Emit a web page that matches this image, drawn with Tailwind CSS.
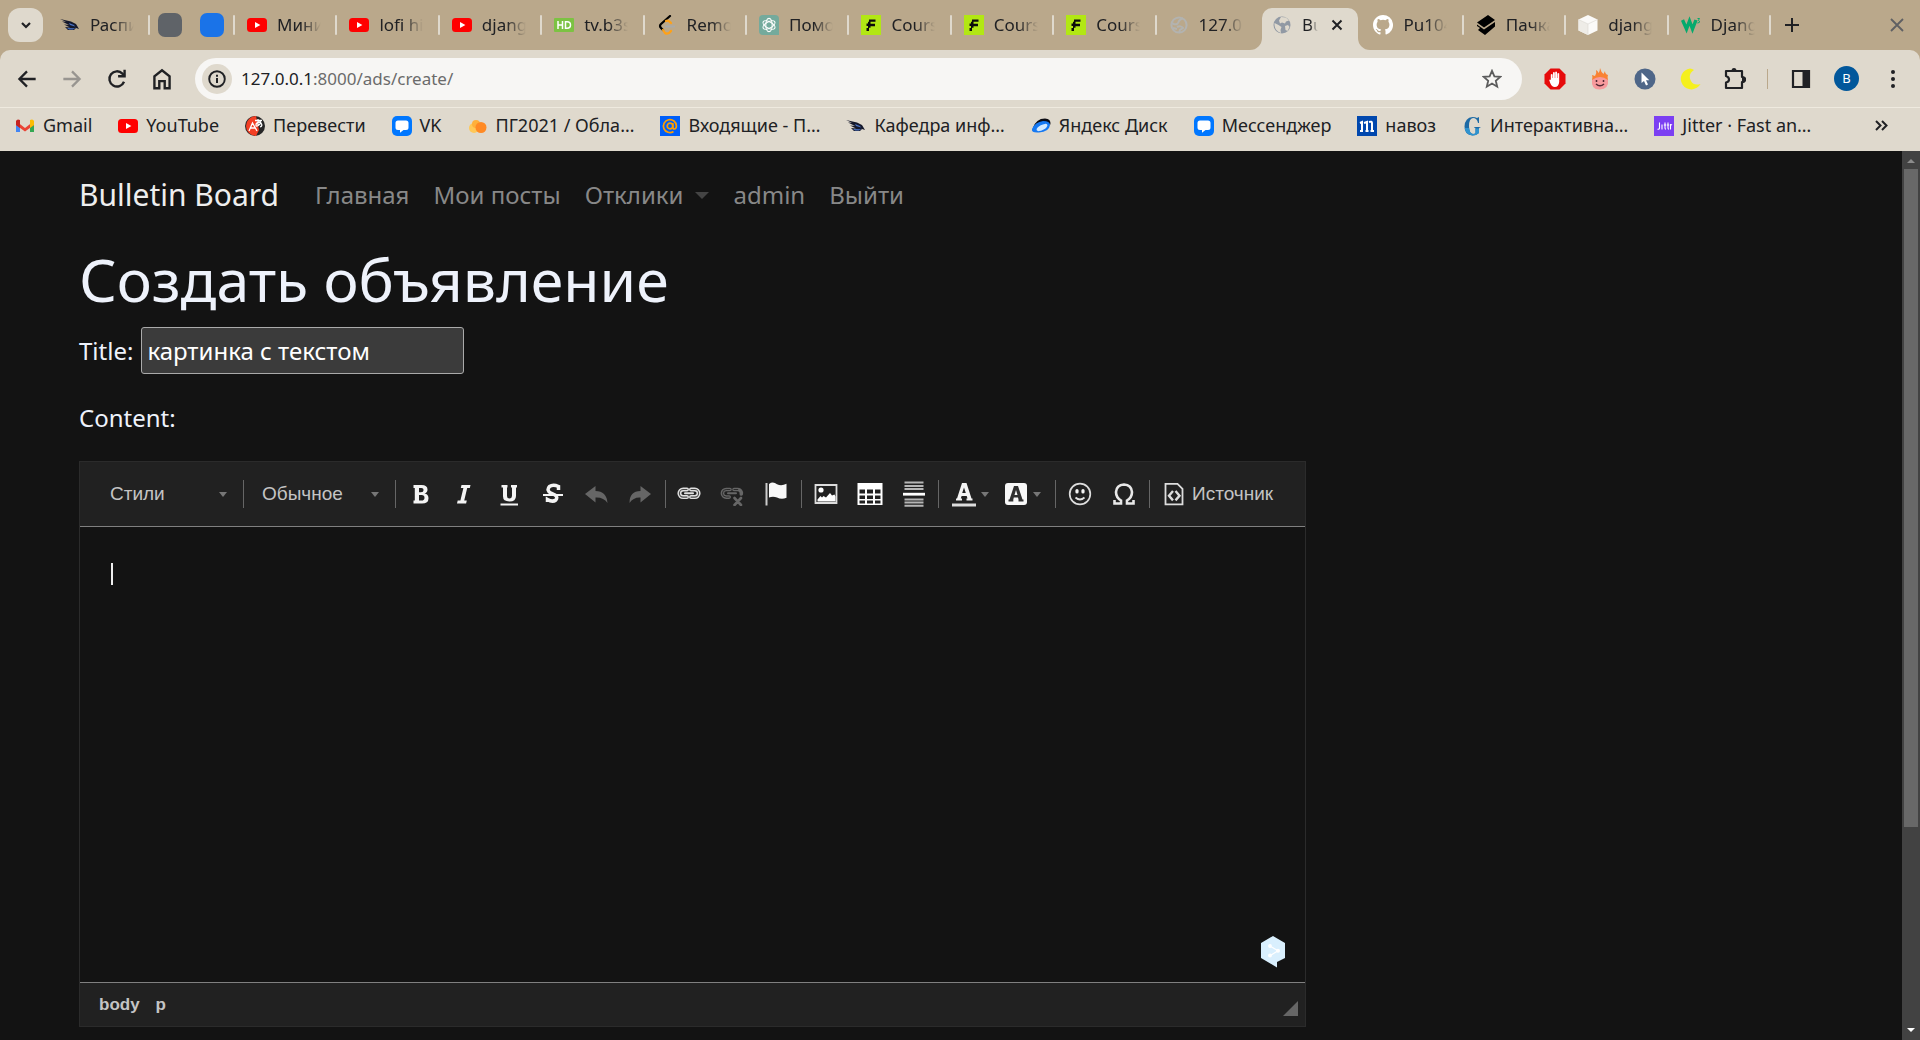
<!DOCTYPE html>
<html lang="ru">
<head>
<meta charset="utf-8">
<title>Bulletin Board</title>
<script src="https://cdn.jsdelivr.net/npm/@tailwindcss/browser@4"></script>
</head>
<body class="flex h-screen flex-col overflow-hidden bg-[#131313] font-['Noto_Sans',sans-serif] text-[#202124]">

<svg class="hidden" aria-hidden="true">
  <symbol id="yt" viewBox="0 0 20 20"><rect y="3" width="20" height="14" rx="3.5" fill="#f00"/><path d="M8 7l5.400 3L8 13z" fill="#fff"/></symbol>
  <symbol id="bird" viewBox="0 0 20 20"><path d="M0 4l11 2.500 5 2.500 3 5-3-1-2 2H8l-3-3 5 .5-6-3 5 .5L2 6.500l4 .3z" fill="#15192c"/><path d="M7 13l7 .3 2-.8-3 2H9zM9 8l5 2 1 1.500-5-1.500z" fill="#4a72c4"/></symbol>
  <symbol id="eff" viewBox="0 0 20 20"><path d="M0 0h20v20H0z" fill="#b2e714"/><path d="M8 4.500h6.500v2.300H9.500v2H14v2.400H9.500v1.600H8V16H5.500v-3H7v-2H5.500V8.500H7V6.800h1z" fill="#0c0c0c"/></symbol>
  <symbol id="globe" viewBox="0 0 20 20"><circle cx="10" cy="10" r="8.500" fill="#9199a4"/><path d="M9 2l5 .5 3 3-3 1-1 2-3-1-2 1-1-3zM2.500 8l4 2 3 2-1 3 .5 3q-6-2-6.500-8zM13 11l3-1 1.500 2-2 4-2-1z" fill="#dfd9cd"/></symbol>
  <symbol id="globeout" viewBox="0 0 20 20"><circle cx="10" cy="10" r="7.600" fill="none" stroke="#b3b3b0" stroke-width="2"/><path d="M3 8c2 1 3 2 5 1s1-3 3-4l3-2M8 12c2-1 5-1 6 1l-3 2-1 3M4 13l4 1" fill="none" stroke="#b3b3b0" stroke-width="2"/></symbol>
  <symbol id="chat" viewBox="0 0 20 20"><rect width="20" height="20" rx="5" fill="#07f"/><path d="M6 4.500h8A2.500 2.500 0 0 1 16.500 7v4.500A2.500 2.500 0 0 1 14 14h-2.500L8 16.800V14H6a2.500 2.500 0 0 1-2.500-2.500V7A2.500 2.500 0 0 1 6 4.500z" fill="#fff"/></symbol>
  <symbol id="caret" viewBox="0 0 8 5"><path d="M0 0h8L4 5z" fill="#777"/></symbol>
</svg>

<header class="shrink-0 bg-[#baa88b]">
  <!-- tab strip -->
  <div class="flex h-[50px] items-center pl-2 text-[17px]">
    <button aria-label="Поиск вкладок" class="flex h-[34px] w-[35px] shrink-0 items-center justify-center rounded-xl bg-[#dfd9cd]"><svg class="size-3" viewBox="0 0 12 12"><path d="M2 4l4 4 4-4" fill="none" stroke="#202124" stroke-width="2.200"/></svg></button>
    <a href="#" class="ml-[17px] flex h-full w-[88px] shrink-0 items-center gap-[10px]"><svg class="size-5 shrink-0"><use href="#bird"/></svg><span class="w-11 overflow-hidden whitespace-nowrap [mask-image:linear-gradient(to_right,black_55%,transparent)]">Расписание</span></a>
    <span class="h-5 w-0.5 shrink-0 rounded bg-[#dfd9cd]"></span>
    <a href="#" aria-label="Вкладка" class="ml-2 h-6 w-6 shrink-0 rounded-[7px] bg-[#5f6368]"></a>
    <a href="#" aria-label="Вкладка" class="ml-[18px] h-6 w-6 shrink-0 rounded-[7px] bg-[#1a73e8]"></a>
    <span class="ml-[9px] h-5 w-0.5 shrink-0 rounded bg-[#dfd9cd]"></span>
    <nav class="grid h-full min-w-0 flex-1 grid-cols-15">
      <a href="#" class="flex min-w-0 items-center gap-[10px] pl-3"><svg class="size-5 shrink-0"><use href="#yt"/></svg><span class="w-[44px] overflow-hidden whitespace-nowrap [mask-image:linear-gradient(to_right,black_55%,transparent)]">Миникурс</span><span class="ml-auto h-5 w-0.5 rounded bg-[#dfd9cd]"></span></a>
      <a href="#" class="flex min-w-0 items-center gap-[10px] pl-3"><svg class="size-5 shrink-0"><use href="#yt"/></svg><span class="w-[44px] overflow-hidden whitespace-nowrap [mask-image:linear-gradient(to_right,black_55%,transparent)]">lofi hip</span><span class="ml-auto h-5 w-0.5 rounded bg-[#dfd9cd]"></span></a>
      <a href="#" class="flex min-w-0 items-center gap-[10px] pl-3"><svg class="size-5 shrink-0"><use href="#yt"/></svg><span class="w-[44px] overflow-hidden whitespace-nowrap [mask-image:linear-gradient(to_right,black_55%,transparent)]">django</span><span class="ml-auto h-5 w-0.5 rounded bg-[#dfd9cd]"></span></a>
      <a href="#" class="flex min-w-0 items-center gap-[10px] pl-3"><svg class="size-5 shrink-0" viewBox="0 0 20 20"><rect y="3" width="20" height="14" rx="1" fill="#7cc243"/><path d="M4 6v8M8.500 6v8M4 10h4.500M11.500 6.800v6.400h1.500q3.500 0 3.500-3.200T13 6.800z" fill="none" stroke="#fff" stroke-width="1.500"/></svg><span class="w-[44px] overflow-hidden whitespace-nowrap [mask-image:linear-gradient(to_right,black_55%,transparent)]">tv.b3s</span><span class="ml-auto h-5 w-0.5 rounded bg-[#dfd9cd]"></span></a>
      <a href="#" class="flex min-w-0 items-center gap-[10px] pl-3"><svg class="size-5 shrink-0" viewBox="0 0 20 20" fill="none" stroke-width="2.200" stroke-linecap="round"><path d="M13 1L4 9q-2 2 0 4l2 2" stroke="#000"/><path d="M9 6q2-1 4 1l1 1M6 15l2 3q3 2 6-2" stroke="#ffa116"/><path d="M9 11.500h8" stroke="#aaa"/></svg><span class="w-[44px] overflow-hidden whitespace-nowrap [mask-image:linear-gradient(to_right,black_55%,transparent)]">Remove</span><span class="ml-auto h-5 w-0.5 rounded bg-[#dfd9cd]"></span></a>
      <a href="#" class="flex min-w-0 items-center gap-[10px] pl-3"><svg class="size-5 shrink-0" viewBox="0 0 20 20"><path d="M4 0h12q4 0 4 4v16H4q-4 0-4-4V4q0-4 4-4z" fill="#74aa9c"/><g fill="none" stroke="#fff" stroke-width="1.100"><ellipse cx="10" cy="10" rx="3.200" ry="6.600"/><ellipse cx="10" cy="10" rx="3.200" ry="6.600" transform="rotate(60 10 10)"/><ellipse cx="10" cy="10" rx="3.200" ry="6.600" transform="rotate(120 10 10)"/></g></svg><span class="w-[44px] overflow-hidden whitespace-nowrap [mask-image:linear-gradient(to_right,black_55%,transparent)]">Помощь</span><span class="ml-auto h-5 w-0.5 rounded bg-[#dfd9cd]"></span></a>
      <a href="#" class="flex min-w-0 items-center gap-[10px] pl-3"><svg class="size-5 shrink-0"><use href="#eff"/></svg><span class="w-[44px] overflow-hidden whitespace-nowrap [mask-image:linear-gradient(to_right,black_55%,transparent)]">Course</span><span class="ml-auto h-5 w-0.5 rounded bg-[#dfd9cd]"></span></a>
      <a href="#" class="flex min-w-0 items-center gap-[10px] pl-3"><svg class="size-5 shrink-0"><use href="#eff"/></svg><span class="w-[44px] overflow-hidden whitespace-nowrap [mask-image:linear-gradient(to_right,black_55%,transparent)]">Course</span><span class="ml-auto h-5 w-0.5 rounded bg-[#dfd9cd]"></span></a>
      <a href="#" class="flex min-w-0 items-center gap-[10px] pl-3"><svg class="size-5 shrink-0"><use href="#eff"/></svg><span class="w-[44px] overflow-hidden whitespace-nowrap [mask-image:linear-gradient(to_right,black_55%,transparent)]">Course</span><span class="ml-auto h-5 w-0.5 rounded bg-[#dfd9cd]"></span></a>
      <a href="#" class="flex min-w-0 items-center gap-[10px] pl-3"><svg class="size-5 shrink-0"><use href="#globeout"/></svg><span class="w-[44px] overflow-hidden whitespace-nowrap [mask-image:linear-gradient(to_right,black_55%,transparent)]">127.0.</span></a>
      <div class="relative mr-[3px] ml-[3px] flex h-[42px] items-center self-end rounded-t-[10px] bg-[#dfd9cd] pb-2 pl-[10px]">
        <svg class="absolute bottom-0 -left-3 size-3" viewBox="0 0 12 12"><path d="M12 0v12H0A12 12 0 0 0 12 0z" fill="#dfd9cd"/></svg>
        <svg class="absolute -right-3 bottom-0 size-3" viewBox="0 0 12 12"><path d="M0 0v12h12A12 12 0 0 1 0 0z" fill="#dfd9cd"/></svg>
        <svg class="size-5 shrink-0"><use href="#globe"/></svg>
        <a href="#" class="ml-[10px] w-4 overflow-hidden whitespace-nowrap [mask-image:linear-gradient(to_right,black_50%,transparent)]">Bulletin</a>
        <button aria-label="Закрыть вкладку" class="ml-[13px]"><svg class="size-3" viewBox="0 0 12 12"><path d="M1.500 1.500l9 9m0-9l-9 9" stroke="#202124" stroke-width="2"/></svg></button>
      </div>
      <a href="#" class="flex min-w-0 items-center gap-[10px] pl-3"><svg class="size-5 shrink-0" viewBox="0 0 16 16" fill="#fff"><path d="M8 0C3.580 0 0 3.580 0 8c0 3.540 2.290 6.530 5.470 7.590.4.070.55-.17.55-.38 0-.19-.01-.82-.01-1.490-2.010.37-2.530-.49-2.690-.94-.09-.23-.48-.94-.82-1.130-.28-.15-.68-.52-.01-.53.63-.01 1.080.58 1.230.82.72 1.210 1.870.87 2.330.66.070-.52.28-.87.510-1.070-1.780-.2-3.640-.89-3.640-3.950 0-.87.310-1.590.82-2.150-.08-.2-.36-1.020.08-2.120 0 0 .67-.21 2.200.82a7.600 7.600 0 0 1 4 0c1.530-1.040 2.200-.82 2.200-.82.44 1.100.16 1.920.08 2.120.51.56.82 1.270.82 2.150 0 3.070-1.870 3.750-3.650 3.950.29.25.54.73.54 1.480 0 1.070-.01 1.930-.01 2.200 0 .21.15.46.55.38A8 8 0 0 0 8 0z"/></svg><span class="w-[44px] overflow-hidden whitespace-nowrap [mask-image:linear-gradient(to_right,black_55%,transparent)]">Pu104</span><span class="ml-auto h-5 w-0.5 rounded bg-[#dfd9cd]"></span></a>
      <a href="#" class="flex min-w-0 items-center gap-[10px] pl-3"><svg class="size-5 shrink-0" viewBox="0 0 20 20"><path d="M1 7.500L12 0l7 5L8 12.500zM1 9.500l7 5L19 7v4.500L9 20l-7-5 2-2-3-2z" fill="#000"/></svg><span class="w-[44px] overflow-hidden whitespace-nowrap [mask-image:linear-gradient(to_right,black_55%,transparent)]">Пачка</span><span class="ml-auto h-5 w-0.5 rounded bg-[#dfd9cd]"></span></a>
      <a href="#" class="flex min-w-0 items-center gap-[10px] pl-3"><svg class="size-5 shrink-0" viewBox="0 0 20 20"><path d="M10 0l9.500 4.500v11L10 20 .5 15.500v-11z" fill="#fbfaf8"/><path d="M.5 4.500L10 9v11L.5 15.500z" fill="#eeece7"/><path d="M.5 4.500L10 9l9.500-4.500M10 9v11" fill="none" stroke="#dedbd5" stroke-width=".7"/></svg><span class="w-[44px] overflow-hidden whitespace-nowrap [mask-image:linear-gradient(to_right,black_55%,transparent)]">django</span><span class="ml-auto h-5 w-0.5 rounded bg-[#dfd9cd]"></span></a>
      <a href="#" class="flex min-w-0 items-center gap-[10px] pl-3"><svg class="size-5 shrink-0" viewBox="0 0 20 20" fill="none"><path d="M1.500 5l4 9 3-8 3 8L15 5" stroke="#04aa6d" stroke-width="3.400"/><path d="M16.500 3.500h2l-1.200 2q2 .5 1 2l-2 .5" stroke="#04aa6d" stroke-width="1"/></svg><span class="w-[44px] overflow-hidden whitespace-nowrap [mask-image:linear-gradient(to_right,black_55%,transparent)]">Django</span><span class="ml-auto h-5 w-0.5 rounded bg-[#dfd9cd]"></span></a>
    </nav>
    <div class="flex w-[149px] shrink-0 items-center justify-between pr-4 pl-[14px]">
      <button aria-label="Новая вкладка"><svg class="size-[14px]" viewBox="0 0 14 14"><path d="M7 0v14M0 7h14" stroke="#202124" stroke-width="2"/></svg></button>
      <button aria-label="Закрыть окно"><svg class="size-[14px]" viewBox="0 0 14 14"><path d="M1 1l12 12M13 1L1 13" stroke="#5f6063" stroke-width="1.800"/></svg></button>
    </div>
  </div>

  <!-- address bar -->
  <div class="flex h-[58px] items-center rounded-t-[10px] border-b border-[#efeadf] bg-[#dfd9cd] pr-[17px] pl-[14px]">
    <div class="flex shrink-0 gap-[19px]">
      <button aria-label="Назад"><svg class="size-[26px]" viewBox="0 0 24 24" fill="none" stroke="#202124" stroke-width="2.100"><path d="M20 12H5M12 5l-7 7 7 7"/></svg></button>
      <button aria-label="Вперёд"><svg class="size-[26px]" viewBox="0 0 24 24" fill="none" stroke="#989590" stroke-width="2.100"><path d="M4 12h15M12 5l7 7-7 7"/></svg></button>
      <button aria-label="Обновить"><svg class="size-[26px]" viewBox="0 0 24 24" fill="none" stroke="#202124" stroke-width="2.200"><path d="M18.500 14.500A7 7 0 1 1 17 7l2 2"/><path d="M19 3.500v6h-6"/></svg></button>
      <button aria-label="Домой"><svg class="size-[26px]" viewBox="0 0 24 24" fill="none" stroke="#202124" stroke-width="2.200"><path d="M5 20.500V9.500L12 4l7 5.500v11h-4.500V14h-5v6.500z"/></svg></button>
    </div>
    <div class="ml-5 flex h-[42px] min-w-0 flex-1 items-center rounded-full bg-[#f7f6f4] pr-5 pl-[7px]">
      <button aria-label="Сведения о сайте" class="flex size-[30px] shrink-0 items-center justify-center rounded-full bg-[#dfd9cd]"><svg class="size-[18px]" viewBox="0 0 18 18"><circle cx="9" cy="9" r="7.800" fill="none" stroke="#202124" stroke-width="1.900"/><path d="M9 8v5M9 4.700v2" stroke="#202124" stroke-width="2"/></svg></button>
      <a href="#" class="ml-[9px] flex-1 pt-px text-[17px] text-[#6b6b6b]"><span class="text-[#202124]">127.0.0.1</span>:8000/ads/create/</a>
      <button aria-label="Добавить в закладки"><svg class="size-5" viewBox="0 0 20 20"><path d="M10 1.800l2.400 5.500 6 .5-4.600 4 1.400 5.900L10 14.500l-5.200 3.200 1.400-5.900-4.600-4 6-.5z" fill="none" stroke="#5c5c5c" stroke-width="1.800"/></svg></button>
    </div>
    <div class="ml-[22px] flex shrink-0 items-center">
      <div class="flex gap-[23px]">
        <button aria-label="AdBlock"><svg class="size-[22px]" viewBox="0 0 22 22"><path d="M6.500.5h9l6 6v9l-6 6h-9l-6-6v-9z" fill="#e60b0b"/><path d="M6.800 12V6.500q.9-1 1.800 0V10h.4V4.500q.9-1 1.800 0V10h.4V4q.9-1 1.800 0v6h.4V5.500q.9-1 1.800 0V14q-.5 5-4.500 5-3 0-4.500-4l-1-3q.8-1 1.600 0z" fill="#fff"/></svg></button>
        <button aria-label="Hola"><svg class="size-[22px]" viewBox="0 0 22 22"><path d="M11 0q1 4 3.500 6L16 3q0 3 3 4-1 2 0 5l-1 5H4L3 12q1-3 0-5l3 1q2-3 1-6 2 1 2.500 3Q11 3 11 0z" fill="#f98234"/><path d="M3 12q8-6 16 0 1 9-8 9.500T3 12z" fill="#f79a9d"/><path d="M7.500 12v2M14.500 12v2M7 16q4 3.500 8 0" fill="none" stroke="#552a35" stroke-width="1.500"/></svg></button>
        <button aria-label="Курсор"><svg class="size-[22px]" viewBox="0 0 22 22"><circle cx="11" cy="11" r="10.500" fill="#4e6688"/><path d="M7.500 4.500v10.500l2.500-2 2 4.500 2-1-2-4.200h3.300z" fill="#fff"/></svg></button>
        <button aria-label="Тёмная тема"><svg class="size-[22px]" viewBox="0 0 22 22"><path d="M11 .5A10.500 10.500 0 1 0 21.500 16Q14 18 11.500 12 9 6 15 2 13 .5 11 .5z" fill="#f5f01e"/></svg></button>
        <button aria-label="Расширения"><svg class="size-[22px]" viewBox="0 0 22 22"><path d="M2 3h16v6q3 0 3 2.500T18 14v6H2v-5.500q3-.5 3-3T2 8z" fill="none" stroke="#202124" stroke-width="2.200" stroke-linejoin="round"/><path d="M7.500 3q0-3 2.500-3t2.500 3zM18 8.500q4 0 4 3t-4 3z" fill="#202124"/></svg></button>
      </div>
      <span class="ml-[21px] h-5 w-px bg-[#baa88b]"></span>
      <button aria-label="Боковая панель" class="ml-[23px]"><svg class="size-5" viewBox="0 0 20 20"><path d="M2 2h16v16H2z" fill="none" stroke="#202124" stroke-width="2.200"/><path d="M11.500 2H18v16h-6.500z" fill="#202124"/></svg></button>
      <button class="ml-[23px] flex size-[25px] items-center justify-center rounded-full bg-[#01579b] text-[13px] text-white">B</button>
      <button aria-label="Меню" class="ml-6"><svg class="size-5" viewBox="0 0 20 20" fill="#202124"><circle cx="10" cy="3" r="2"/><circle cx="10" cy="10" r="2"/><circle cx="10" cy="17" r="2"/></svg></button>
    </div>
  </div>

  <!-- bookmarks -->
  <nav class="flex h-[43px] items-center gap-[26px] bg-[#dfd9cd] pr-8 pb-2 pl-[15px] text-[18px] whitespace-nowrap">
    <a href="#" class="flex items-center gap-2"><svg class="size-5" viewBox="0 0 20 20"><path d="M1 5v11h4V8z" fill="#4285f4"/><path d="M19 5v11h-4V8z" fill="#34a853"/><path d="M1 5l9 7 9-7v4l-9 6.500L1 9z" fill="#ea4335"/><path d="M1 9V5q1-2.500 4-1v8z" fill="#c5221f"/><path d="M19 9V5q-1-2.500-4-1v8z" fill="#fbbc04"/></svg>Gmail</a>
    <a href="#" class="flex items-center gap-2"><svg class="size-5"><use href="#yt"/></svg>YouTube</a>
    <a href="#" class="flex items-center gap-2"><svg class="size-5" viewBox="0 0 20 20"><circle cx="10" cy="10" r="10" fill="#262626"/><path d="M11 0A10 10 0 1 0 11 20l3-6z" fill="#f33f24"/><path d="M4 15l3.500-8L12 15M5.500 12h5M10 4.500h7M13 3v6.500M16 6q-5 0-5 3t5-2q2 3-1 4" fill="none" stroke="#fff" stroke-width="1.300"/></svg>Перевести</a>
    <a href="#" class="flex items-center gap-2"><svg class="size-5"><use href="#chat"/></svg>VK</a>
    <a href="#" class="flex items-center gap-2"><svg class="size-5" viewBox="0 0 20 20"><circle cx="6" cy="12" r="5" fill="#ffc857"/><circle cx="8" cy="8" r="4" fill="#ffb03a"/><circle cx="13" cy="11.500" r="5.500" fill="#ff8a24"/></svg>ПГ2021 / Обла…</a>
    <a href="#" class="flex items-center gap-2"><svg class="size-5" viewBox="0 0 20 20"><path d="M0 0h20v20H0z" fill="#005ff9"/><circle cx="10" cy="10" r="2.800" fill="none" stroke="#ff9e00" stroke-width="1.700"/><path d="M12.800 7v4q0 2 1.700 2t1.900-3A6.500 6.500 0 1 0 13.500 15.500" fill="none" stroke="#ff9e00" stroke-width="1.700"/></svg>Входящие - П…</a>
    <a href="#" class="flex items-center gap-2"><svg class="size-5"><use href="#bird"/></svg>Кафедра инф…</a>
    <a href="#" class="flex items-center gap-2"><svg class="size-5" viewBox="0 0 20 20"><path d="M2 12Q5 2.500 14 2.500q6 0 5.500 6L12 7z" fill="#0b0b12"/><path d="M1 13Q4 6 12 5q7 0 7 4-1 7-11 7.500Q0 17 1 13z" fill="#1679f2"/><ellipse cx="11" cy="11.500" rx="6" ry="2.600" transform="rotate(-28 11 11.500)" fill="#d3eaff"/></svg>Яндекс Диск</a>
    <a href="#" class="flex items-center gap-2"><svg class="size-5"><use href="#chat"/></svg>Мессенджер</a>
    <a href="#" class="flex items-center gap-2"><svg class="size-5" viewBox="0 0 20 20"><path d="M0 0h20v20H0z" fill="#0148ae"/><path d="M5 15V6l-2 1M10 15V6L7 7M15 15V7q0-2-3-1M3 15h3M8.500 15h3M13.500 15h3.500" fill="none" stroke="#fff" stroke-width="2"/></svg>навоз</a>
    <a href="#" class="flex items-center gap-2"><svg class="size-5" viewBox="0 0 20 20"><path d="M17 1v6h-1Q15 2 11 2 7 2.500 7 10t4 8q2 0 2.500-1v-4.500q0-1-1.500-1V11h6.500v.5q-1.500 0-1.500 1v4.500Q14 19.500 10.500 19.500 2.500 19 2.500 10.500 3 1.500 10.500 1q3 0 4.500 1z" fill="#1d6aa5"/><path d="M2.700 12H7.100q.6 5.500 3.900 6 2 0 2.500-1v-4.500H17V17q-3 2.500-6.500 2.500-7-.5-7.800-7.500z" fill="#2f93cf"/></svg>Интерактивна…</a>
    <a href="#" class="flex items-center gap-2"><svg class="size-5" viewBox="0 0 20 20"><path d="M0 0h20v20H0z" fill="#7b3ff2"/><path d="M5.500 6.500V12q0 1.500-2 1.200M8 8.500v5M11 6.500V12q0 1.200 1 1.200M9.800 9h2.500M14 6.500V12q0 1.200 1 1.200M13 9h2.200M16.500 13.500v-5q1 0 1.500.5" fill="none" stroke="#fff" stroke-width="1.100"/></svg>Jitter · Fast an…</a>
    <button aria-label="Другие закладки" class="ml-auto"><svg class="size-[14px]" viewBox="0 0 14 14"><path d="M2 2l4.500 4.500L2 11M8 2l4.500 4.500L8 11" fill="none" stroke="#202124" stroke-width="2"/></svg></button>
  </nav>
</header>

<div class="flex min-h-0 flex-1">
  <main class="min-w-0 flex-1 px-[79px] text-[24px] leading-9 text-[#eef2fb]">
    <nav class="flex h-[88px] items-center gap-6 text-[#888]">
      <a href="#" class="mr-3 text-[30px] text-[#eee]">Bulletin Board</a>
      <a href="#">Главная</a>
      <a href="#">Мои посты</a>
      <a href="#" class="flex items-center gap-3">Отклики <svg class="h-[7px] w-[14px]" viewBox="0 0 14 7"><path d="M0 0h14L7 7z" fill="#444"/></svg></a>
      <a href="#">admin</a>
      <button>Выйти</button>
    </nav>
    <h1 class="mt-1 text-[59px] leading-[72px] text-[#eef2fb]">Создать объявление</h1>
    <form>
      <div class="mt-3 flex items-center gap-2">
        <label for="title">Title:</label>
        <input id="title" type="text" value="картинка с текстом" class="h-[47px] w-[323px] rounded-[3px] border border-[#aaa] bg-[#3b3b3b] px-[5px] text-white">
      </div>
      <label for="content" class="mt-[26px] block">Content:</label>

      <div class="mt-[25px] w-[1227px] max-w-full border border-[#2b2b2b] font-['Liberation_Sans',sans-serif] text-[19px] leading-6 text-[#c4c4c4]">
        <div class="flex h-[65px] items-center border-b border-[#808080] bg-[#212121] pl-[30px]">
          <label class="flex items-center"><select aria-label="Стили" class="w-[109px] appearance-none bg-[#212121]"><option>Стили</option></select><svg class="h-[5px] w-2"><use href="#caret"/></svg></label>
          <span class="mr-[18px] ml-4 h-7 w-px bg-[#666]"></span>
          <label class="flex items-center"><select aria-label="Формат" class="w-[109px] appearance-none bg-[#212121]"><option>Обычное</option></select><svg class="h-[5px] w-2"><use href="#caret"/></svg></label>
          <span class="mr-[3px] ml-4 h-7 w-px bg-[#666]"></span>

          <button type="button" aria-label="Полужирный" class="flex w-11 justify-center"><svg class="size-6" viewBox="0 0 24 24"><path d="M4.500 3h8q6 0 6 4.500 0 3-3 4 4 .8 4 4.800 0 5.200-6.500 5.200H4.500v-3h1.300V6H4.500zM10 6v4.200h2q2.600 0 2.600-2.200T12 6zm0 7v5.500h2.500q3 0 3-2.800T12.500 13z" fill="#f4f4f4" fill-rule="evenodd"/></svg></button>
          <button type="button" aria-label="Курсив" class="flex w-11 justify-center"><svg class="size-6" viewBox="0 0 24 24"><path d="M8.500 3h9l-.7 3h-2.600l-3 12.500h2.600l-.7 3H4l.7-3h2.700l3-12.500H7.800z" fill="#f4f4f4"/></svg></button>
          <button type="button" aria-label="Подчеркнутый" class="flex w-11 justify-center"><svg class="size-6" viewBox="0 0 24 24"><path d="M4.500 3h6v2.500H10V14q0 2.500 2.400 2.500T15 14V5.500h-1V3h6v2.500h-1V14q0 5.500-6.600 5.500T6 14V5.500H4.500zM3.500 21.500h17.500v2H3.500z" fill="#f4f4f4"/></svg></button>
          <button type="button" aria-label="Зачеркнутый" class="flex w-11 justify-center"><svg class="size-6" viewBox="0 0 24 24"><path d="M17.500 8V4.500Q12 2 8.500 4.500q-3.500 4 1.500 6.700l4 1.800q3 2 .8 5-3.300 2.500-8.300-.5v2.500" fill="none" stroke="#f4f4f4" stroke-width="3.500"/><path d="M2 12h20v2H2z" fill="#f4f4f4"/></svg></button>
          <button type="button" disabled aria-label="Отменить" class="flex w-11 justify-center"><svg class="size-6" viewBox="0 0 24 24"><path d="M0 12l10.500-8v5q11 0 12 12-4-6-12-5.500v5z" fill="#666"/></svg></button>
          <button type="button" disabled aria-label="Повторить" class="flex w-11 justify-center"><svg class="size-6" viewBox="0 0 24 24"><path d="M22 12L11.500 4v5q-11 0-11 12 4-6 11-5.500v5z" fill="#666"/></svg></button>
          <span class="mx-0.5 h-7 w-px bg-[#666]"></span>

          <button type="button" aria-label="Ссылка" class="flex w-[42px] justify-center"><svg class="size-6" viewBox="0 0 24 24" fill="none" stroke-linecap="round"><path d="M10 7.500H6.200a3.800 3.800 0 0 0 0 7.600h3.800M14 7.500h3.800a3.800 3.800 0 0 1 0 7.600H14" stroke="#e0e0e0" stroke-width="4"/><path d="M10 7.500H6.200a3.800 3.800 0 0 0 0 7.600h3.800M14 7.500h3.800a3.800 3.800 0 0 1 0 7.600H14" stroke="#4a4a4a" stroke-width="1.100"/><path d="M8 11.300h8" stroke="#e0e0e0" stroke-width="2"/></svg></button>
          <button type="button" disabled aria-label="Убрать ссылку" class="flex w-11 justify-center"><svg class="size-6" viewBox="0 0 24 24" fill="none" stroke="#666" stroke-linecap="round"><path d="M10 7.500H6.200a3.800 3.800 0 0 0 0 7.600h3M14 7.500h3.800a3.800 3.800 0 0 1 3.500 4.500" stroke-width="3.600"/><path d="M10 7.500H6.200a3.800 3.800 0 0 0 0 7.600h3M14 7.500h3.800" stroke="#2c2c2c" stroke-width="1"/><path d="M8 11.300h8" stroke-width="2"/><path d="M14.500 16l6.500 7m0-7l-6.500 7" stroke-width="2.600"/></svg></button>
          <button type="button" aria-label="Якорь" class="flex w-11 justify-center"><svg class="size-6" viewBox="0 0 24 24"><path d="M1.500 1h2v22.500h-2z" fill="#ccc"/><path d="M5 2q4-3 8 .3 4.500 2 9.500-.5v14q-5 2-9.500-.3-4-1.500-8 0z" fill="#f8f8f8"/></svg></button>
          <span class="mr-0.5 ml-[3px] h-7 w-px bg-[#666]"></span>

          <button type="button" aria-label="Изображение" class="flex w-11 justify-center"><svg class="size-6" viewBox="0 0 24 24"><path d="M1.500 3h21v18h-21z" fill="none" stroke="#ddd" stroke-width="1.800"/><circle cx="7" cy="8" r="2.600" fill="#fff"/><path d="M3.500 19.500v-2l3-3.500 1.500 1.500 1.500-1.500 2.500 1.500 4-4.500 2 2.500 2.500-1 1 2v5z" fill="#fff"/></svg></button>
          <button type="button" aria-label="Таблица" class="flex w-11 justify-center"><svg class="h-6 w-[26px]" viewBox="0 0 26 24"><path d="M.5 1h25v22H.5zM2.500 7.500v4h5.500v-4zm7.500 0v4h6v-4zm8 0v4h5.500v-4zM2.500 13.500v3.500h5.500v-3.500zm7.500 0v3.500h6v-3.500zm8 0v3.500h5.500v-3.500zM2.500 18.500v3h5.500v-3zm7.500 0v3h6v-3zm8 0v3h5.500v-3z" fill="#fff" fill-rule="evenodd"/></svg></button>
          <button type="button" aria-label="Горизонтальная линия" class="flex w-11 justify-center"><svg class="h-[26px] w-6" viewBox="0 0 24 26"><path d="M2.500 1.500h19M2.500 5h19M2.500 8h19M2.500 18.500h19M2.500 21.500h19M2.500 24.800h19" stroke="#b5b5b5" stroke-width="2"/><path d="M1 13.200h22" stroke="#fff" stroke-width="2.800"/></svg></button>
          <span class="mx-0.5 h-7 w-px bg-[#666]"></span>

          <div class="flex pr-2">
            <button type="button" aria-label="Цвет текста" class="flex w-[52px] items-center gap-[5px] pl-[11px]"><svg class="h-[26px] w-6 shrink-0" viewBox="0 0 24 26"><path d="M10 2h4.500l5 15.500h1v2h-6v-2h1l-.8-2.500H9.600l-.8 2.500h1.200v2H4v-2h1zM12 6.500l-1.800 5.500h3.600z" fill="#f4f4f4" fill-rule="evenodd"/><path d="M0 22.500h24v3H0z" fill="#ddd"/></svg><svg class="h-[5px] w-2"><use href="#caret"/></svg></button>
            <button type="button" aria-label="Цвет фона" class="flex w-[52px] items-center gap-[5px] pl-[11px]"><svg class="size-6 shrink-0" viewBox="0 0 24 24"><rect x="1" y="1" width="22" height="22" rx="3" fill="#f8f8f8"/><path d="M10 4h4l4.500 13.500h1v2h-5v-2l-.5-2H9.800l-.5 2v2H4.500v-2h1zM12 8l-1.500 5h3z" fill="#303030" fill-rule="evenodd"/></svg><svg class="h-[5px] w-2"><use href="#caret"/></svg></button>
          </div>
          <span class="mx-0.5 h-7 w-px bg-[#666]"></span>

          <button type="button" aria-label="Смайлы" class="flex w-11 justify-center"><svg class="size-6" viewBox="0 0 24 24"><circle cx="12" cy="12" r="10.300" fill="none" stroke="#ddd" stroke-width="1.700"/><path d="M9 8.500v1.500M15 8.500v1.500" stroke="#f4f4f4" stroke-width="3.200" stroke-linecap="round"/><path d="M7.500 15.500q4.500 4 9 0" fill="none" stroke="#e4e4e4" stroke-width="1.800"/></svg></button>
          <button type="button" aria-label="Специальный символ" class="flex w-11 justify-center"><svg class="size-6" viewBox="0 0 24 24"><path d="M2.500 18v3.500H9V18.500Q4 15.500 4 10q.5-7 8-7.500 7.500.5 8 7.500 0 5.500-5 8.500v3h6.500V18" fill="none" stroke="#e8e8e8" stroke-width="2.600"/></svg></button>
          <span class="mr-0.5 ml-[3px] h-7 w-px bg-[#666]"></span>
          <button type="button" class="ml-[10px] flex items-center gap-[6px]"><svg class="size-6" viewBox="0 0 24 24" fill="none" stroke="#ddd" stroke-width="1.800"><path d="M3.500 1.800h12l5 5v15.500h-17z"/><path d="M11 9l-4 4.700 4 4.700M13.500 9l4 4.700-4 4.700" stroke-width="2.400"/></svg>Источник</button>
        </div>

        <div class="relative h-[456px] border-b border-[#808080]">
          <textarea id="content" class="block size-full resize-none bg-[#131313] p-[30px] outline-none"></textarea>
          <span class="absolute top-9 left-[31px] h-[22px] w-0.5 bg-[#eee]"></span>
          <button type="button" aria-label="Перевести текст" class="absolute right-[19px] bottom-[14px] flex"><svg class="h-8 w-[26px]" viewBox="0 0 26 32"><path d="M13 0l12 7v15l-8 4v5.500L1 22V7z" fill="#d9effd"/><path d="M10 10l8 4.700-8 5" fill="none" stroke="#fff" stroke-width="1.200"/><g fill="#fff"><circle cx="10" cy="10" r="1.900"/><circle cx="18" cy="14.700" r="2"/><circle cx="10" cy="19.500" r="1.900"/></g></svg></button>
        </div>
        <div class="flex h-[43px] items-center justify-between bg-[#212121] pr-[7px] pl-[19px] text-[17px] font-bold">
          <div class="flex gap-4"><a href="#">body</a><a href="#">p</a></div>
          <svg class="mt-2 size-[15px]" viewBox="0 0 15 15"><path d="M15 0v15H0z" fill="#666"/></svg>
        </div>
      </div>
    </form>
  </main>

  <div class="flex w-[18px] shrink-0 flex-col items-center bg-[#424242]" aria-hidden="true">
    <svg class="mt-2 h-1 w-2" viewBox="0 0 8 4"><path d="M4 0l4 4H0z" fill="#8c8c8c"/></svg>
    <div class="mt-[6px] h-[74%] w-[14px] bg-[#686868]"></div>
    <svg class="mt-auto mb-2 h-1 w-2" viewBox="0 0 8 4"><path d="M0 0h8L4 4z" fill="#fff"/></svg>
  </div>
</div>
</body>
</html>
